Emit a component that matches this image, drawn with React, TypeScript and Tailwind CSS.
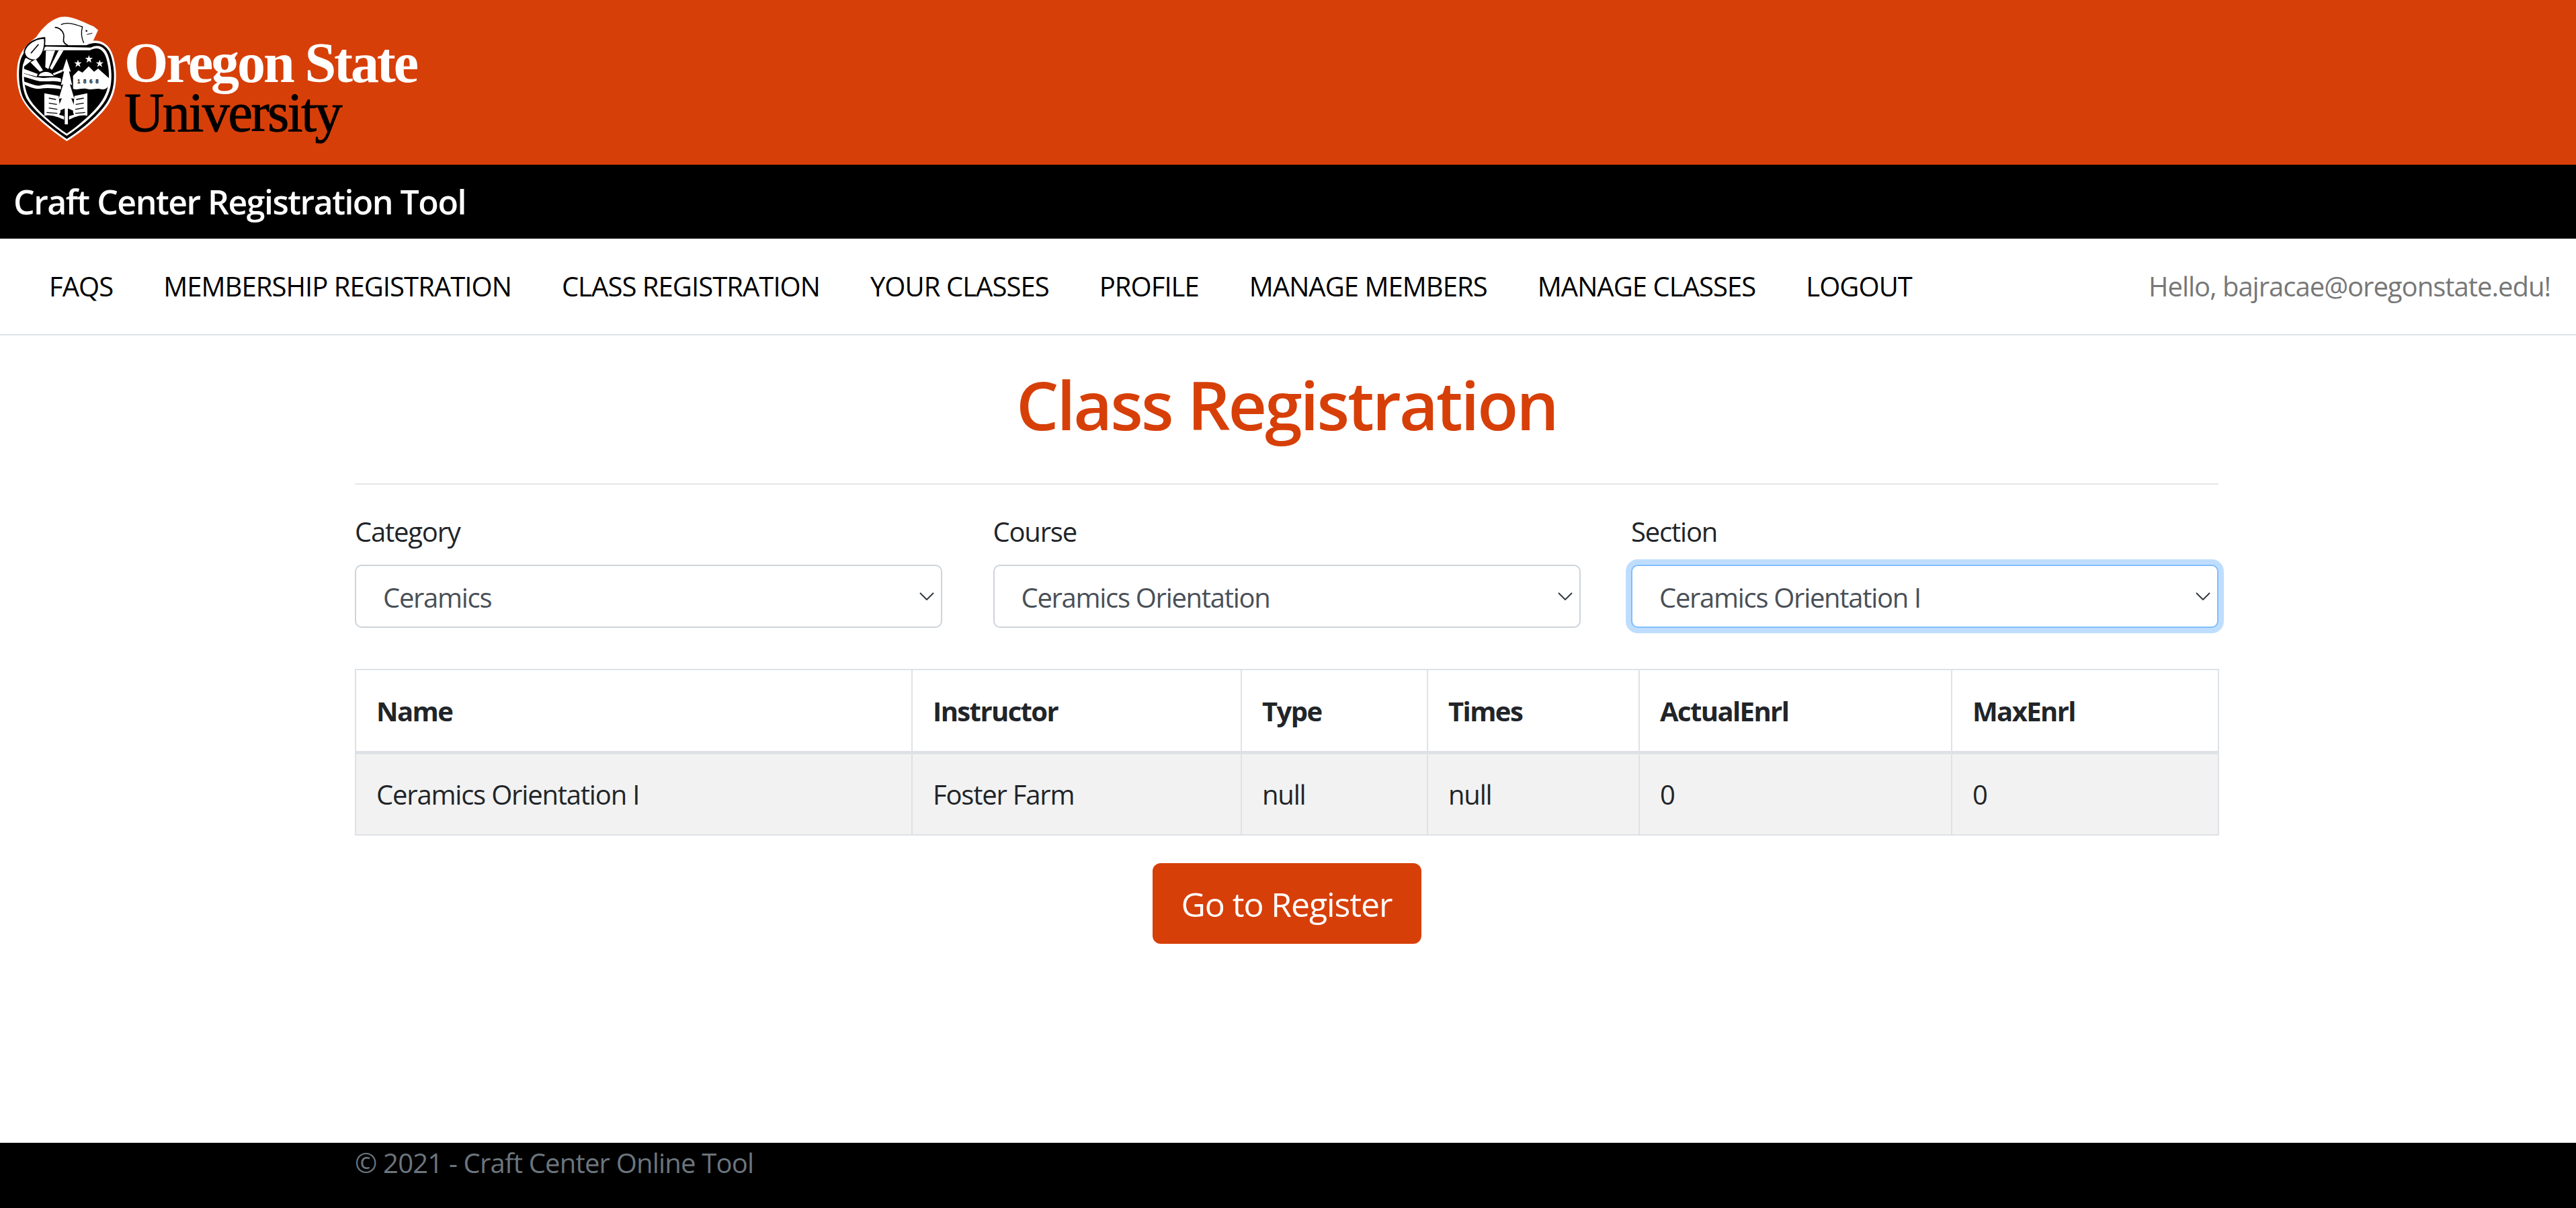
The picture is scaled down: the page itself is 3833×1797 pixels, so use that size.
import React from 'react';

const navItems = [
  'FAQS',
  'MEMBERSHIP REGISTRATION',
  'CLASS REGISTRATION',
  'YOUR CLASSES',
  'PROFILE',
  'MANAGE MEMBERS',
  'MANAGE CLASSES',
  'LOGOUT',
];

const Crest = () => (
  <svg viewBox="0 0 600 690" className="w-[200px] h-[230px] shrink-0">
    {/* outer silhouette */}
    <path
      fill="#fff"
      d="M298 630C230 585 130 505 100 445C72 390 72 320 80 280C88 240 108 205 162 165C195 115 240 74 290 74C330 74 385 105 418 118L438 134L416 182C452 178 490 198 505 250C523 312 526 392 492 452C460 512 362 592 298 630Z"
    />
    <path
      fill="#000"
      d="M298 620C235 577 136 500 106 442C82 392 82 322 88 284C94 250 110 224 150 192L176 174L204 202L386 202C440 176 484 204 497 254C514 314 516 390 484 446C454 504 358 584 298 620Z"
    />
    {/* white ring */}
    <path
      fill="#fff"
      d="M298 606C240 567 148 494 118 438C96 392 96 326 102 290L112 262L205 208L405 212C445 192 474 214 486 258C502 316 504 388 474 440C446 496 352 572 298 606Z"
    />
    <path
      fill="#000"
      d="M298 596C244 560 156 488 128 434C106 392 104 330 108 296L200 224L402 224C440 204 464 224 475 262C491 318 493 386 463 436C437 488 348 564 298 596Z"
    />
    {/* beaver */}
    <path fill="none" stroke="#000" strokeWidth="5" d="M245 122C272 124 290 148 284 172C280 188 292 198 304 203" />
    <path fill="none" stroke="#000" strokeWidth="4" d="M272 110C300 96 335 108 368 120C362 140 362 165 374 192" />
    <path fill="none" stroke="#000" strokeWidth="3" d="M388 154L412 148" />
    <circle cx="386" cy="138" r="4" fill="#000" />
    {/* leaf */}
    <path fill="#000" d="M202 166C160 166 116 192 106 228C104 254 128 274 162 271C190 254 206 215 202 166Z" />
    <path fill="#fff" d="M196 174C160 174 122 197 112 228C110 250 130 268 160 265C185 250 200 215 196 174Z" />
    <path fill="none" stroke="#000" strokeWidth="5" d="M138 238L172 198" />
    {/* sun rays */}
    <path fill="#fff" d="M205 226L246 226L216 308L202 300Z" />
    <path fill="#fff" d="M262 224L284 224L232 312L222 304Z" />
    <path fill="#fff" d="M136 278L160 264L192 314L178 320Z" />
    <path fill="#fff" d="M104 306L168 330L164 342L104 326Z" />
    <path fill="#fff" d="M280 310L276 322L240 336L236 328Z" />
    <path fill="#fff" d="M172 340C178 318 222 312 240 340Z" />
    {/* water */}
    <path
      fill="#fff"
      d="M104 328C135 336 155 346 175 346C205 352 235 340 272 350L272 366C235 358 205 366 175 362C150 358 130 348 104 342Z"
    />
    <path
      fill="#fff"
      d="M106 364C135 372 155 384 178 382C210 372 240 378 272 384L272 398C240 394 210 390 178 396C150 398 130 386 110 378Z"
    />
    {/* tree */}
    <path
      fill="#fff"
      d="M297 262L316 320L308 318L322 380L312 376L332 442L318 438L342 500L303 484L303 555L289 555L289 484L252 500L276 438L262 442L282 376L272 380L286 318L278 320Z"
    />
    {/* books */}
    <path fill="#fff" d="M198 416L262 428L270 500L264 512L286 518L286 534C255 520 225 510 198 516Z" />
    <path fill="#fff" d="M390 416L332 428L326 500L330 512L308 518L308 534C335 520 365 510 390 516Z" />
    <path
      fill="none"
      stroke="#000"
      strokeWidth="4"
      d="M218 438L250 444M218 460L254 466M218 482L256 488M208 502L256 506M340 444L374 438M338 466L374 460M336 488L374 482M336 506L380 502"
    />
    {/* mountains */}
    <path
      fill="#fff"
      d="M326 338L350 314L368 324L396 296L420 320L438 306L488 350L488 378C480 392 470 402 452 398C430 392 410 404 385 396C360 392 345 404 326 396Z"
    />
    <text x="344" y="372" fill="#000" fontSize="26" fontWeight="700" letterSpacing="13" fontFamily="'Liberation Sans', sans-serif">
      1868
    </text>
    {/* stars */}
    <path fill="#fff" d="M348 266L352 278L365 278L355 286L359 299L348 291L337 299L341 286L331 278L344 278Z" />
    <path fill="#fff" d="M397 246L401 258L414 258L404 266L408 280L397 272L386 280L390 266L380 258L393 258Z" />
    <path fill="#fff" d="M445 266L449 278L462 278L452 286L456 299L445 291L434 299L438 286L428 278L441 278Z" />
  </svg>
);

const Chevron = () => (
  <svg viewBox="0 0 22 12" className="absolute right-[12px] top-[41px] w-[22px] h-[12px] pointer-events-none">
    <path d="M1 1L11 11L21 1" fill="none" stroke="#343a40" strokeWidth="2" />
  </svg>
);

const Field = ({ label, value, focused }: { label: string; value: string; focused?: boolean }) => (
  <div className="w-[874px]">
    <label className="block text-[40px] leading-[60px] tracking-[-1.2px] text-[#212529] mb-[19px]">{label}</label>
    <div className="relative">
      <select
        defaultValue={value}
        className={
          focused
            ? 'block w-full h-[94px] appearance-none rounded-[10px] border-2 border-[#80bdff] bg-white pl-[40px] pt-[4px] text-[40px] tracking-[-1.3px] text-[#495057] outline-none shadow-[0_0_0_8px_rgba(0,123,255,0.25)]'
            : 'block w-full h-[94px] appearance-none rounded-[10px] border-2 border-[#ced4da] bg-white pl-[40px] pt-[4px] text-[40px] tracking-[-1.3px] text-[#495057] outline-none'
        }
      >
        <option>{value}</option>
      </select>
      <Chevron />
    </div>
  </div>
);

const columns = [
  { name: 'Name', value: 'Ceramics Orientation I', width: 'w-[828px]' },
  { name: 'Instructor', value: 'Foster Farm', width: 'w-[490px]' },
  { name: 'Type', value: 'null', width: 'w-[277px]' },
  { name: 'Times', value: 'null', width: 'w-[315px]' },
  { name: 'ActualEnrl', value: '0', width: 'w-[465px]' },
  { name: 'MaxEnrl', value: '0', width: 'w-[397px]' },
];

export default function App() {
  return (
    <div className="min-h-screen flex flex-col bg-white font-['Open_Sans',sans-serif] text-[#212529]">
      <header className="h-[245px] bg-[#d73f09] flex items-start overflow-hidden">
        <Crest />
        <div className="-ml-[15px] pt-[56px] font-['Liberation_Serif',serif] flex flex-col">
          <span className="text-[84px] leading-[76px] font-bold tracking-[-3.1px] text-white">Oregon State</span>
          <span className="text-[82px] leading-[72px] tracking-[-2.4px] text-black [-webkit-text-stroke:1px_black]">
            University
          </span>
        </div>
      </header>

      <div className="h-[110px] bg-black flex items-center pl-[20px]">
        <span className="text-[50px] leading-[60px] font-semibold tracking-[-1.5px] text-white">
          Craft Center Registration Tool
        </span>
      </div>

      <nav className="h-[144px] border-b-2 border-[#dee2e6] flex items-center justify-between pl-[73px] pr-[38px]">
        <ul className="flex gap-[75px]">
          {navItems.map((item) => (
            <li key={item} className="text-[40px] leading-[60px] tracking-[-0.95px] text-black">
              {item}
            </li>
          ))}
        </ul>
        <span className="text-[40px] leading-[60px] tracking-[-1px] text-[#777]">Hello, bajracae@oregonstate.edu!</span>
      </nav>

      <main className="flex-1 w-[2773px] ml-[528px] flex flex-col">
        <h1 className="mt-[42px] text-center text-[100px] leading-[120px] font-semibold tracking-[-3px] text-[#d73f09]">
          Class Registration
        </h1>
        <hr className="mt-[58px] border-t-[2.5px] border-[#e6e6e6]" />
        <div className="mt-[40px] flex justify-between">
          <Field label="Category" value="Ceramics" />
          <Field label="Course" value="Ceramics Orientation" />
          <Field label="Section" value="Ceramics Orientation I" focused />
        </div>
        <table className="mt-[61px] w-[2772px] table-fixed border-collapse border-2 border-[#dee2e6]">
          <thead>
            <tr className="h-[123px]">
              {columns.map((col) => (
                <th
                  key={col.name}
                  className={`${col.width} border-2 border-b-[5px] border-[#dee2e6] px-[30px] pt-[2px] text-left text-[40px] font-bold tracking-[-1.6px]`}
                >
                  {col.name}
                </th>
              ))}
            </tr>
          </thead>
          <tbody>
            <tr className="h-[123px] bg-[#f2f2f2]">
              {columns.map((col) => (
                <td key={col.name} className="border-2 border-[#dee2e6] px-[30px] pt-[2px] text-[40px] tracking-[-1.2px]">
                  {col.value}
                </td>
              ))}
            </tr>
          </tbody>
        </table>
        <div className="mt-[41px] flex justify-center">
          <button className="w-[400px] h-[120px] rounded-[12px] bg-[#d73f09] pt-[3px] text-[50px] tracking-[-1.1px] text-white">
            Go to Register
          </button>
        </div>
      </main>

      <footer className="h-[97px] bg-black pl-[528px] text-[40px] leading-[60px] tracking-[-0.8px] text-[#6c757d]">
        © 2021 - Craft Center Online Tool
      </footer>
    </div>
  );
}
